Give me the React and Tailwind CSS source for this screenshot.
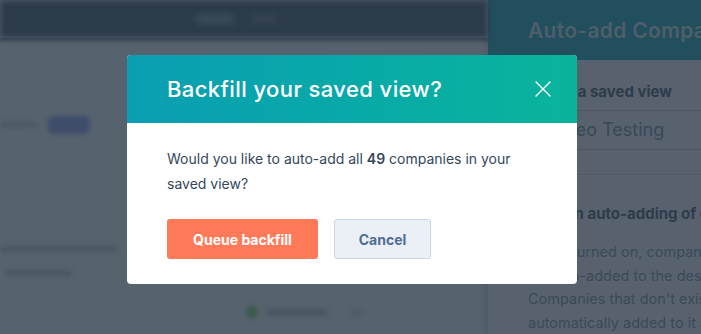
import { X } from 'lucide-react';

function App() {
  return (
    <div
      className="relative w-[701px] h-[334px] overflow-hidden bg-[#56626e]"
      style={{ fontFamily: 'Inter, "Noto Sans", sans-serif' }}
    >
      {/* page behind the dialog, dimmed */}
      <div className="flex h-full">
        <div className="flex-1 flex flex-col">
          <div className="h-[38px] bg-[#2c3b4a] flex items-center gap-4 pl-[196px] blur-[3px]">
            <div className="w-[38px] h-[10px] rounded bg-[#3b4a59]" />
            <div className="w-[28px] h-[8px] rounded bg-[#35444f]" />
          </div>
          <div className="h-[6px] bg-gradient-to-b from-[#3f4c5a] to-[#56626e]" />
          <div className="flex-1 relative blur-[2px]">
            <div className="flex items-center gap-3 mt-[72px]">
              <div className="w-[36px] h-[6px] rounded bg-[#4c5865]" />
              <div className="w-[42px] h-[18px] rounded-md bg-[#3f4d6b]" />
            </div>
            <div className="mt-[112px] w-[118px] h-[6px] rounded bg-[#4b5763]" />
            <div className="mt-[18px] ml-[6px] w-[66px] h-[6px] rounded bg-[#4b5763]" />
            <div className="mt-[30px] ml-[246px] flex items-center gap-2">
              <div className="w-[12px] h-[12px] rounded-full bg-[#3e5a4a]" />
              <div className="w-[62px] h-[7px] rounded bg-[#4a5662]" />
              <div className="w-[10px] h-[7px] rounded bg-[#4f5b67] ml-4" />
            </div>
          </div>
        </div>

        <div className="w-[213px] flex flex-col bg-[#57626e] shadow-[-3px_0_6px_rgba(0,0,0,0.08)]">
          <div className="h-[63px] bg-[#224f5d] pl-[40px] pt-[15px]">
            <div className="text-[21px] font-semibold text-[#4e5e6b] whitespace-nowrap tracking-[0.3px]">
              Auto-add Companies
            </div>
          </div>
          <div className="pl-[40px] pt-[22px] text-[#2e3c4a] whitespace-nowrap">
            <div className="text-[15px] font-bold leading-[20px] pb-[8px] border-b border-[#4c5763]">
              Select a saved view
            </div>
            <div className="text-[18px] text-[#394756] leading-[38px] pl-[20px] border-b border-[#4c5763]">
              Video Testing
            </div>
            <div className="h-[25px] border-b border-[#4f5a66]" />
            <div className="text-[15px] font-bold leading-[20px] mt-[29px]">
              Turn on auto-adding of companies
            </div>
            <div className="text-[14.5px] leading-[23.5px] mt-[16px] text-[#3c4a58]">
              <div>When turned on, companies in this view will</div>
              <div>be auto-added to the destination list.</div>
              <div>Companies that don't exist in the list will be</div>
              <div>automatically added to it as well.</div>
            </div>
          </div>
        </div>
      </div>

      {/* dialog */}
      <div className="absolute inset-0 flex justify-center pt-[55px] pl-[3px]">
        <div className="w-[450px] h-[229px] rounded-[4px] overflow-hidden bg-white flex flex-col">
          <div className="h-[68px] bg-gradient-to-r from-[#0b9eb3] to-[#0ab49b] flex items-center justify-between pl-[40px] pr-[20px]">
            <h2 className="text-[22px] font-medium text-white tracking-[0.4px]">
              Backfill your saved view?
            </h2>
            <X className="w-[28px] h-[28px] text-white" strokeWidth={1.2} />
          </div>
          <div className="flex-1 px-[40px] pt-[23px] pb-[24px] text-[#33475b]">
            <p className="text-[14px] leading-[25px]">
              Would you like to auto-add all <span className="font-semibold">49</span> companies in your saved view?
            </p>
            <div className="flex gap-4 mt-[23px]">
              <button className="h-[40px] w-[151px] rounded-[3px] bg-[#ff7a59] text-white text-[14px] font-bold">
                Queue backfill
              </button>
              <button className="h-[40px] w-[97px] rounded-[3px] bg-[#eaf0f6] border border-[#cbd6e2] text-[#506e91] text-[14px] font-bold">
                Cancel
              </button>
            </div>
          </div>
        </div>
      </div>
    </div>
  );
}

export default App;
